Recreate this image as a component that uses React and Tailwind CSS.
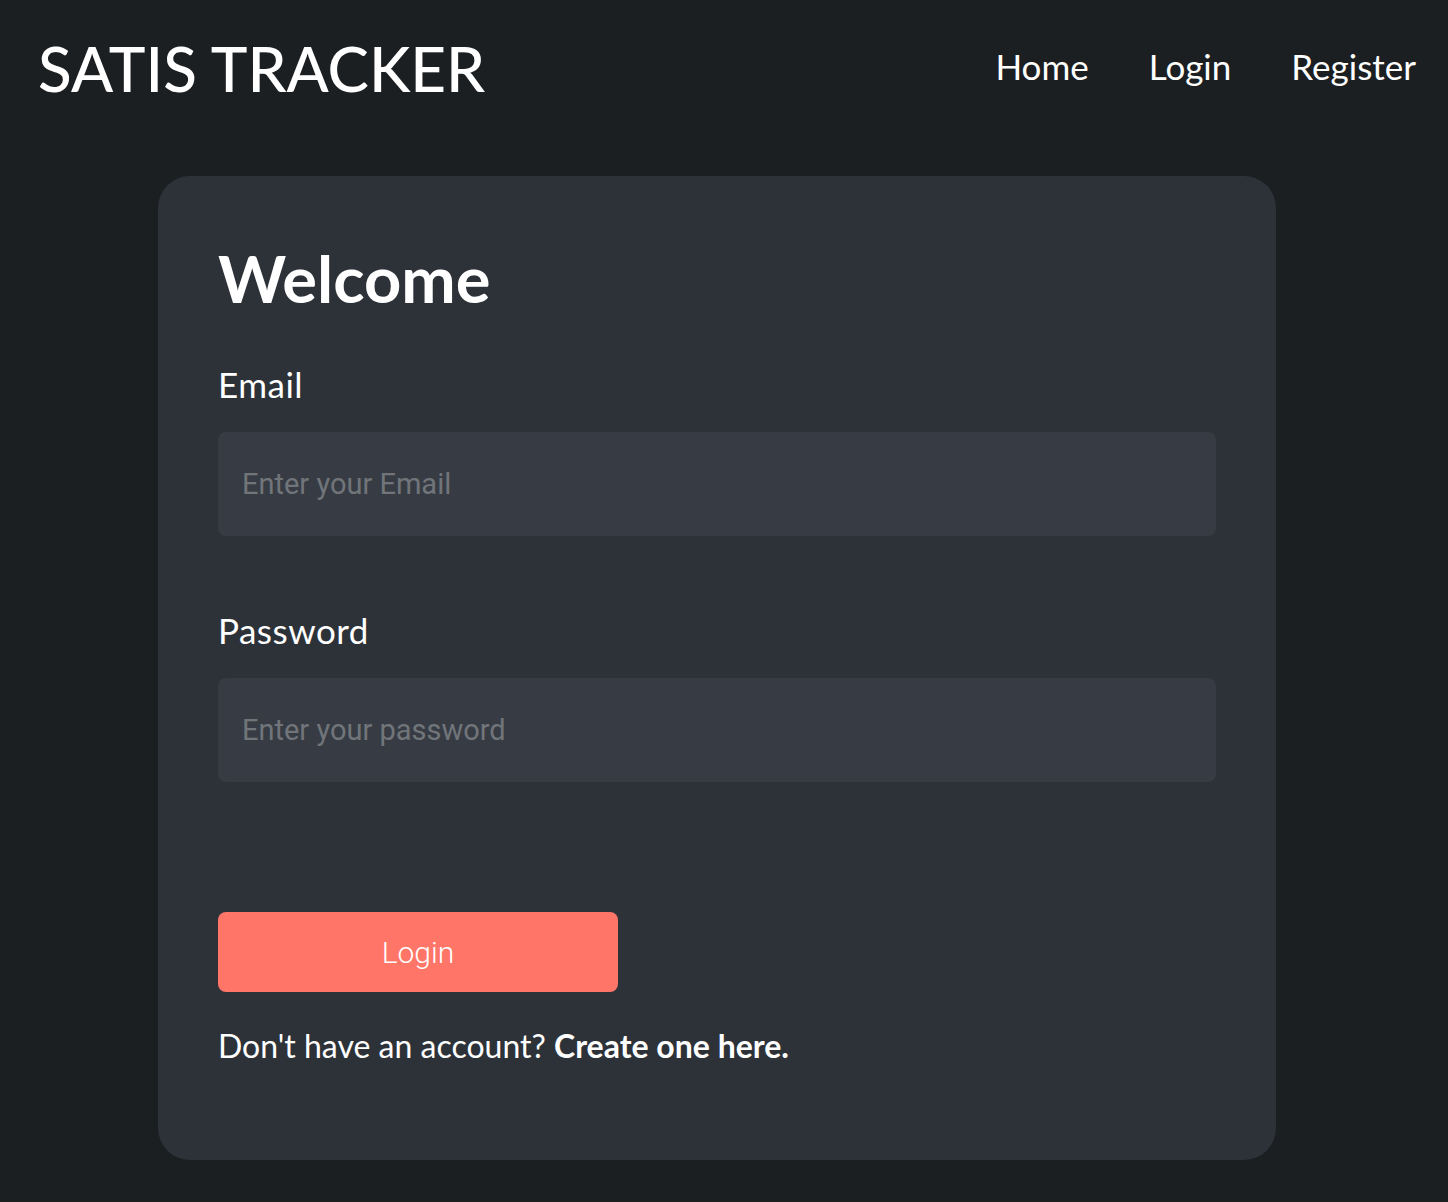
import React from 'react'

const round = { fontFamily: 'Lato, "Open Sans", sans-serif' }
const system = { fontFamily: 'Roboto, Inter, sans-serif' }

function Field({ label, placeholder, type = 'text', className = '' }) {
  return (
    <div className={className}>
      <label className="block text-[35px] leading-[40px] text-white tracking-[0.5px]" style={round}>
        {label}
      </label>
      <input
        type={type}
        placeholder={placeholder}
        className="mt-[28px] block h-[104px] w-full rounded-lg bg-[#373c44] px-6 text-[29px] text-white outline-none placeholder:text-[#71757a]"
        style={system}
      />
    </div>
  )
}

export default function App() {
  return (
    <div className="min-h-screen bg-[#1c1f22] pb-[42px]" style={round}>
      <header className="flex h-[140px] items-start justify-between pl-[38px] pr-[32px] pt-[30px]">
        <h1 className="text-[62px] font-medium leading-[76px] text-white">SATIS TRACKER</h1>
        <nav className="mt-[6px] flex gap-[60px] text-[35px] leading-[60px] text-white">
          <a href="#">Home</a>
          <a href="#">Login</a>
          <a href="#">Register</a>
        </nav>
      </header>

      <main className="ml-[158px] mt-[36px] w-[1118px] rounded-[32px] bg-[#2d3239] px-[60px] pb-[94px] pt-[62px]">
        <h2 className="text-[65px] font-bold leading-[80px] text-white">Welcome</h2>
        <Field label="Email" placeholder="Enter your Email" type="email" className="mt-[46px]" />
        <Field label="Password" placeholder="Enter your password" type="password" className="mt-[74px]" />
        <button
          type="button"
          className="mt-[130px] block h-[80px] w-[400px] rounded-lg bg-[#ff7669] text-[30px] font-light text-white"
          style={system}
        >
          Login
        </button>
        <p className="mt-[34px] text-[32px] leading-[40px] text-white">
          Don't have an account? <a href="#" className="font-bold">Create one here.</a>
        </p>
      </main>
    </div>
  )
}
